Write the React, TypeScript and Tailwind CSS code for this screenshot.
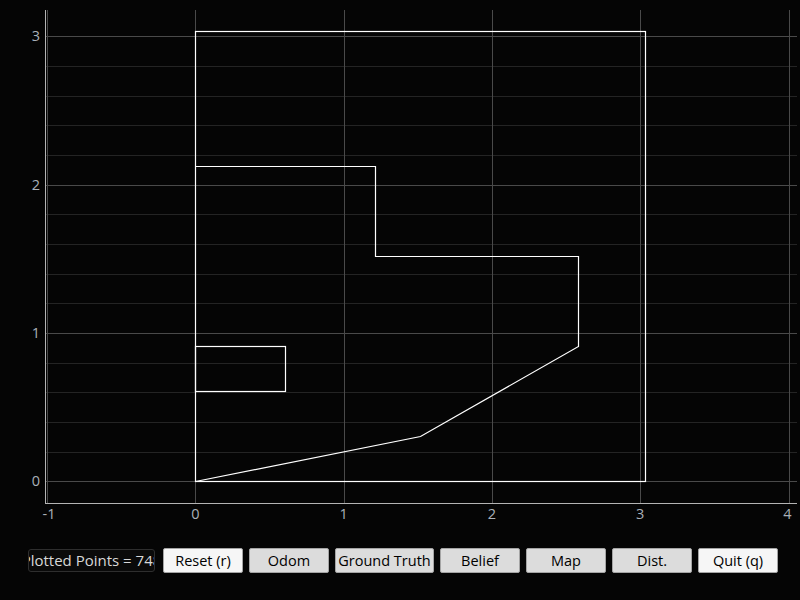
import React from "react";

// data -> pixel: x0 = 195.3, y0 = 481.3, 148.3 px per unit
const X0 = 195.3;
const Y0 = 481.3;
const S = 148.3;

const hLines = Array.from({ length: 16 }, (_, k) => ({
  y: Math.round(Y0 - k * S * 0.2) + 0.5,
  major: k % 5 === 0,
}));

const xTicks = [-1, 0, 1, 2, 3, 4];
const yTicks = [0, 1, 2, 3];

const buttons = [
  { label: "Reset (r)", on: true, w: "w-[80px]" },
  { label: "Odom", on: false, w: "w-[80px]" },
  { label: "Ground Truth", on: false, w: "w-[99px]" },
  { label: "Belief", on: false, w: "w-[80px]" },
  { label: "Map", on: false, w: "w-[80px]" },
  { label: "Dist.", on: false, w: "w-[80px]" },
  { label: "Quit (q)", on: true, w: "w-[80px]" },
];

function Plot() {
  return (
    <svg width={800} height={548} className="block" style={{ fontFamily: '"Open Sans", "DejaVu Sans", sans-serif' }}>
      {/* horizontal grid */}
      {hLines.map((l, i) => (
        <line key={i} x1={45} x2={797} y1={l.y} y2={l.y} stroke={l.major ? "#4a4a4a" : "#242424"} strokeWidth={1} />
      ))}
      {/* vertical grid */}
      {xTicks.map(t => {
        const x = Math.round(X0 + t * S) + 0.5;
        return <line key={t} x1={x} x2={x} y1={10} y2={503} stroke="#4a4a4a" strokeWidth={1} />;
      })}
      {/* axes */}
      <line x1={45.5} x2={45.5} y1={10} y2={503.5} stroke="#b4b4b4" strokeWidth={1} />
      <line x1={45} x2={797} y1={503.5} y2={503.5} stroke="#b4b4b4" strokeWidth={1} />

      {/* tick labels */}
      {xTicks.map(t => (
        <text key={t} x={X0 + t * S + (t === -1 ? 2 : t === 4 ? -1 : 0)} y={519} fontSize={14.5} fill="#a9b0b8" textAnchor="middle">
          {t}
        </text>
      ))}
      {yTicks.map(t => (
        <text key={t} x={40} y={Y0 - t * S + 5} fontSize={14.5} fill="#a9b0b8" textAnchor="end">
          {t}
        </text>
      ))}

      {/* map outline */}
      <g fill="none" stroke="#ffffff" strokeWidth={1.2}>
        <rect x={195.5} y={31.5} width={450} height={450} />
        <polyline points="195.5,166.5 375.5,166.5 375.5,256.5 578.5,256.5 578.5,346.5 420.5,436.5 195.5,481.5" />
        <rect x={195.5} y={346.5} width={90} height={45} />
      </g>
    </svg>
  );
}

export default function App() {
  return (
    <div className="w-[800px] h-[600px] bg-[#050505] overflow-hidden" style={{ fontFamily: '"Open Sans", "Noto Sans", sans-serif' }}>
      <Plot />
      <div className="flex items-center pl-[28px] h-[25px]">
        <div className="w-[127px] h-[23px] rounded-[3px] border border-[#2e2e2e] bg-[#0a0a0a] overflow-hidden flex items-center justify-center">
          <span className="whitespace-nowrap text-[15px] text-[#d8d8d8] shrink-0">Plotted Points = 748</span>
        </div>
        <div className="flex gap-[6px] ml-[8px]">
          {buttons.map(b => (
            <button
              key={b.label}
              className={`${b.w} h-[25px] rounded-[2px] border border-[#a4a4a4] text-[14.5px] text-black ${b.on ? "bg-[#f6f6f6]" : "bg-[#dcdcdc]"}`}
            >
              {b.label}
            </button>
          ))}
        </div>
      </div>
    </div>
  );
}
